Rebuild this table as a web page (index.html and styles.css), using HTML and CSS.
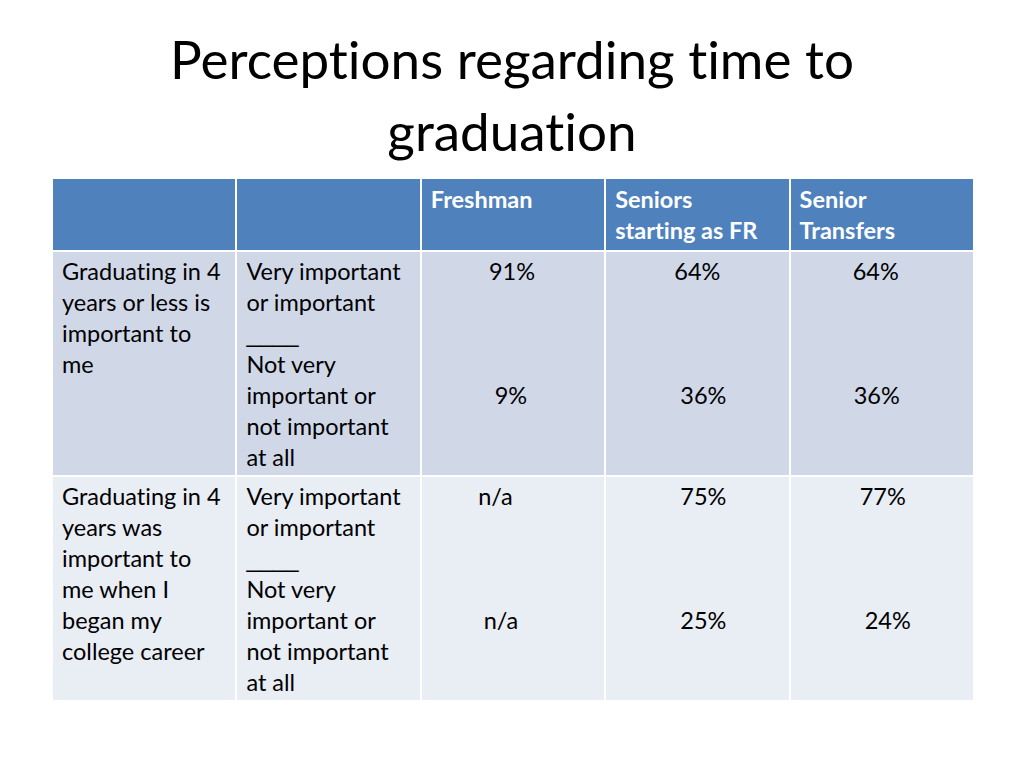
FILE: index.html
```html
<!DOCTYPE html>
<html>
<head>
<meta charset="utf-8">
<link rel="stylesheet" href="styles.css">
</head>
<body>
<div class="slide">
  <h1 class="title">Perceptions regarding time to<br>graduation</h1>
  <table class="grid">
    <colgroup>
      <col class="c"><col class="c"><col class="c"><col class="c"><col class="c">
    </colgroup>
    <thead>
      <tr>
        <th></th>
        <th></th>
        <th>Freshman</th>
        <th>Seniors<br>starting as FR</th>
        <th>Senior<br>Transfers</th>
      </tr>
    </thead>
    <tbody>
      <tr class="odd">
        <td>Graduating in 4<br>years or less is<br>important to<br>me</td>
        <td>Very important<br>or important<br><span class="rule">____</span><br>Not very<br>important or<br>not important<br>at all</td>
        <td class="num"><span class="v sm1">91%</span><br><br><br><br><span class="v sm2">9%</span></td>
        <td class="num"><span class="v">64%</span><br><br><br><br><span class="v sp6">36%</span></td>
        <td class="num"><span class="v sm6">64%</span><br><br><br><br><span class="v sm5">36%</span></td>
      </tr>
      <tr class="even">
        <td>Graduating in 4<br>years was<br>important to<br>me when I<br>began my<br>college career</td>
        <td>Very important<br>or important<br><span class="rule">____</span><br>Not very<br>important or<br>not important<br>at all</td>
        <td class="num"><span class="v sm18">n/a</span><br><br><br><br><span class="v sm12">n/a</span></td>
        <td class="num"><span class="v sp6">75%</span><br><br><br><br><span class="v sp6">25%</span></td>
        <td class="num"><span class="v sp1">77%</span><br><br><br><br><span class="v sp6">24%</span></td>
      </tr>
    </tbody>
  </table>
</div>
</body>
</html>
```

FILE: styles.css
```css
html, body {
  margin: 0;
  padding: 0;
  background: #ffffff;
}

.slide {
  width: 1024px;
  height: 768px;
  font-family: "Lato", "Liberation Sans", sans-serif;
  font-variant-ligatures: none;
  color: #000000;
  padding-top: 23px;
  box-sizing: border-box;
}

.title {
  margin: 0 0 10px 0;
  font-weight: 400;
  font-size: 53px;
  line-height: 72px;
  text-align: center;
}

.grid {
  margin-left: 51px;
  border-collapse: collapse;
  table-layout: fixed;
  width: 922px;
  font-size: 23.5px;
  line-height: 31px;
}

.grid .c {
  width: 184.4px;
}

.grid th,
.grid td {
  border: 2px solid #ffffff;
  vertical-align: top;
  text-align: left;
  white-space: nowrap;
  overflow: hidden;
  padding: 4px 8px 2px 9px;
}

.grid th {
  background: #4f81bd;
  color: #ffffff;
  font-weight: 700;
  padding-top: 5px;
  padding-bottom: 3px;
  height: 63px;
}

.grid .odd td {
  background: #d0d8e8;
}

.grid .even td {
  background: #e9edf4;
}

.grid td.num {
  text-align: center;
  padding-left: 0;
  padding-right: 0;
}

.rule {
  font-family: "Liberation Sans", sans-serif;
  line-height: 0;
}

.v {
  display: inline-block;
}

.sm1 { margin-right: 2px; }
.sm2 { margin-right: 4px; }
.sm5 { margin-right: 10px; }
.sm6 { margin-right: 12px; }
.sm12 { margin-right: 24px; }
.sm18 { margin-right: 35px; }
.sp1 { margin-left: 2px; }
.sp6 { margin-left: 12px; }
```
